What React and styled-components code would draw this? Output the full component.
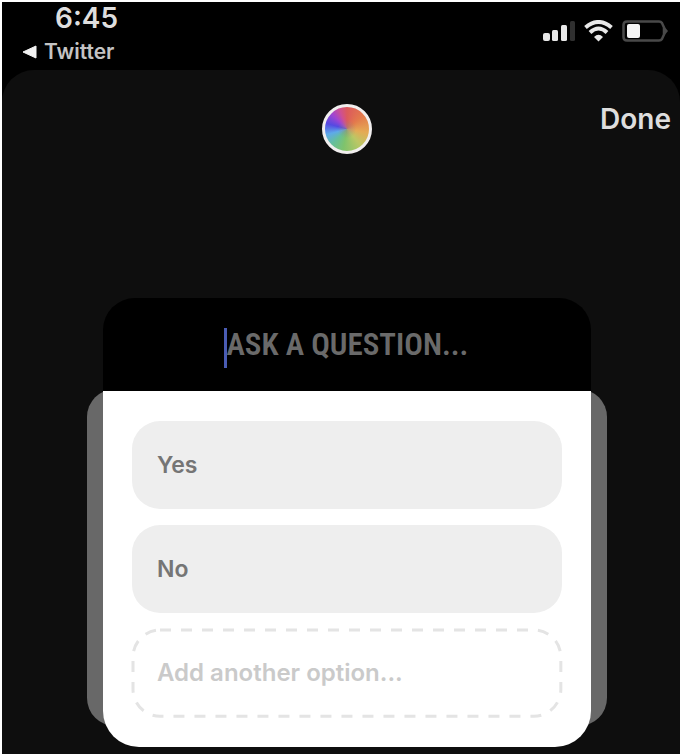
import { useState } from "react"
import styled, { createGlobalStyle } from "styled-components"

const GlobalStyle = createGlobalStyle`
    * {
        box-sizing: border-box;
    }

    body {
        margin: 0;
        background-color: white;
        font-family: Inter, "Liberation Sans", sans-serif;
    }
`;

const Screen = styled.main`
    display: flex;
    flex-direction: column;
    min-height: calc(100vh - 4px);
    margin: 2px;
    background-color: black;
`;

const StatusBar = styled.div`
    display: flex;
    justify-content: space-between;
    height: 68px;
    padding: 0 12px 0 20px;
`;

const Clock = styled.div`
    padding-left: 33px;
    font-size: 28px;
    font-weight: 600;
    line-height: 32px;
    color: #dedede;
`;

const BackLink = styled.a`
    display: flex;
    align-items: center;
    gap: 7px;
    font-size: 21px;
    font-weight: 600;
    line-height: 36px;
    color: #c4c4c4;
    text-decoration: none;
`;

const StatusIcons = styled.div`
    display: flex;
    align-items: center;
    gap: 9px;
    height: 58px;
`;

const Sheet = styled.section`
    flex: 1;
    padding: 34px 9px 7px 21px;
    border-radius: 32px 32px 0 0;
    background-color: #0e0e0e;
`;

const Header = styled.header`
    display: grid;
    grid-template-columns: 1fr auto 1fr;
    align-items: start;
    margin-bottom: 144px;
`;

const ColorButton = styled.button`
    grid-column: 2;
    width: 50px;
    height: 50px;
    padding: 0;
    border: 3px solid #f1eeee;
    border-radius: 50%;
    background:
        radial-gradient(rgba(150,130,130,0.6), rgba(150,130,130,0) 30%),
        conic-gradient(
            #dc5a5c,
            #e37a4c 50deg,
            #e5aa55 100deg,
            #bcc765 140deg,
            #7fc36c 190deg,
            #65bf9c 225deg,
            #5eaae9 255deg,
            #5549e2 285deg,
            #a045d2 315deg,
            #d0508f 340deg,
            #dc5a5c
        );
`;

const DoneButton = styled.button`
    justify-self: end;
    padding: 0;
    border: none;
    background: none;
    font-family: inherit;
    font-size: 28px;
    font-weight: 600;
    line-height: 30px;
    color: #dedede;
`;

const Poll = styled.form`
    display: grid;
    grid-template-columns: 16px 1fr 16px;
    margin: 0 64px;
`;

const Question = styled.div`
    grid-column: 2;
    z-index: 1;
    display: flex;
    align-items: center;
    justify-content: center;
    height: 93px;
    border-radius: 32px 32px 0 0;
    background-color: black;
`;

const Caret = styled.span`
    width: 3px;
    height: 40px;
    margin-top: 6px;
    background-color: #4a5cb4;
`;

const QuestionInput = styled.input`
    width: 244px;
    padding: 0;
    border: none;
    outline: none;
    background: none;
    font-family: "Roboto Condensed", "Liberation Sans Narrow", "Liberation Sans", sans-serif;
    font-size: 31px;
    font-weight: 600;
    color: white;

    &::placeholder {
        color: #6a6a6a;
        opacity: 1;
    }
`;

/* the wings run on under the card, which hides their inner part */
const Wing = styled.span`
    grid-row: 2;
    margin: ${(props) => (props.$side === "left" ? "-2px -16px 21px 0" : "-2px 0 21px -16px")};
    border-radius: ${(props) => (props.$side === "left" ? "28px 0 0 28px" : "0 28px 28px 0")};
    background-color: #686868;
`;

const Options = styled.div`
    grid-row: 2;
    z-index: 1;
    display: flex;
    flex-direction: column;
    gap: 16px;
    padding: 30px 29px;
    border-radius: 0 0 36px 36px;
    background-color: white;
`;

const OptionField = styled.div`
    position: relative;
    height: 88px;
    border-radius: 28px;
    background-color: ${(props) => (props.$empty ? "white" : "#eeeeee")};
`;

const OptionInput = styled.input`
    width: 100%;
    height: 100%;
    padding: 0 25px;
    border: none;
    outline: none;
    background: none;
    font-family: inherit;
    font-size: 23px;
    font-weight: 600;
    color: #757575;

    &::placeholder {
        font-size: 24px;
        color: #cacaca;
        opacity: 1;
    }
`;

const DashedOutline = styled.svg`
    position: absolute;
    inset: 0;
    width: 100%;
    height: 100%;
    overflow: visible;
    pointer-events: none;
`;

const BackArrow = () => (
  <svg width="15" height="14" viewBox="0 0 15 14" aria-hidden="true">
    <path d="M1 7 14 1v12z" fill="#f2f2f2" stroke="#f2f2f2" strokeLinejoin="round" />
  </svg>
)

const SignalIcon = () => (
  <svg width="33" height="21" viewBox="0 0 33 21" aria-hidden="true">
    <rect x="1" y="12" width="7" height="8" rx="2" fill="#e8e8e8" />
    <rect x="10" y="9" width="6" height="11" rx="1.5" fill="#e8e8e8" />
    <rect x="19" y="4" width="6" height="16" rx="1.5" fill="#e8e8e8" />
    <rect x="28" y="0" width="5" height="20" rx="1.5" fill="#303030" />
  </svg>
)

const WifiIcon = () => (
  <svg width="29" height="22" viewBox="0 0 29 22" fill="none" stroke="#e8e8e8" aria-hidden="true">
    <path d="M1.500 7.500Q14.500-3.500 27.500 7.500" strokeWidth="4" />
    <path d="M6 12.500Q14.500 4.500 23 12.500" strokeWidth="4" />
    <path d="M10 17Q14.500 12.500 19 17L14.500 21.500z" fill="#e8e8e8" stroke="none" />
  </svg>
)

const BatteryIcon = () => (
  <svg width="46" height="22" viewBox="0 0 46 22" aria-hidden="true">
    <path
      d="M5 1.500H37Q39 1.500 40 3L42 7.500V14.500L40 19Q39 20.500 37 20.500H5Q1.500 20.500 1.500 17V5Q1.500 1.500 5 1.500z"
      fill="none"
      stroke="#494949"
      strokeWidth="2.500"
    />
    <path d="M42 6 46 11 42 16z" fill="#494949" />
    <rect x="5" y="4" width="13" height="14" rx="2" fill="#f4f4f4" />
  </svg>
)

const App = () => {
  const [question, setQuestion] = useState("")
  const [options, setOptions] = useState(["Yes", "No", ""])

  const changeOption = (index, value) => {
    setOptions(options.map((option, i) => (i === index ? value : option)))
  }

  return (
    <Screen>
      <GlobalStyle />
      <StatusBar>
        <div>
          <Clock>6:45</Clock>
          <BackLink href="#twitter">
            <BackArrow />
            Twitter
          </BackLink>
        </div>
        <StatusIcons>
          <SignalIcon />
          <WifiIcon />
          <BatteryIcon />
        </StatusIcons>
      </StatusBar>
      <Sheet>
        <Header>
          <ColorButton type="button" aria-label="Color" />
          <DoneButton type="submit" form="poll">Done</DoneButton>
        </Header>
        <Poll id="poll" onSubmit={(e) => e.preventDefault()}>
          <Question>
            <Caret />
            <QuestionInput
              aria-label="Question"
              placeholder="ASK A QUESTION..."
              value={question}
              onChange={(e) => setQuestion(e.target.value)}
            />
          </Question>
          <Wing $side="left" />
          <Options>
            {options.map((option, index) => {
              const empty = index === options.length - 1
              return (
                <OptionField key={index} $empty={empty}>
                  {empty && (
                    <DashedOutline aria-hidden="true">
                      <rect
                        x="1"
                        y="1"
                        width="99.5%"
                        height="98%"
                        rx="27"
                        fill="none"
                        stroke="#e4e4e4"
                        strokeWidth="3"
                        strokeDasharray="11 10"
                      />
                    </DashedOutline>
                  )}
                  <OptionInput
                    aria-label={`Option ${index + 1}`}
                    placeholder={empty ? "Add another option..." : undefined}
                    value={option}
                    onChange={(e) => changeOption(index, e.target.value)}
                  />
                </OptionField>
              )
            })}
          </Options>
          <Wing $side="right" />
        </Poll>
      </Sheet>
    </Screen>
  )
}

export default App
